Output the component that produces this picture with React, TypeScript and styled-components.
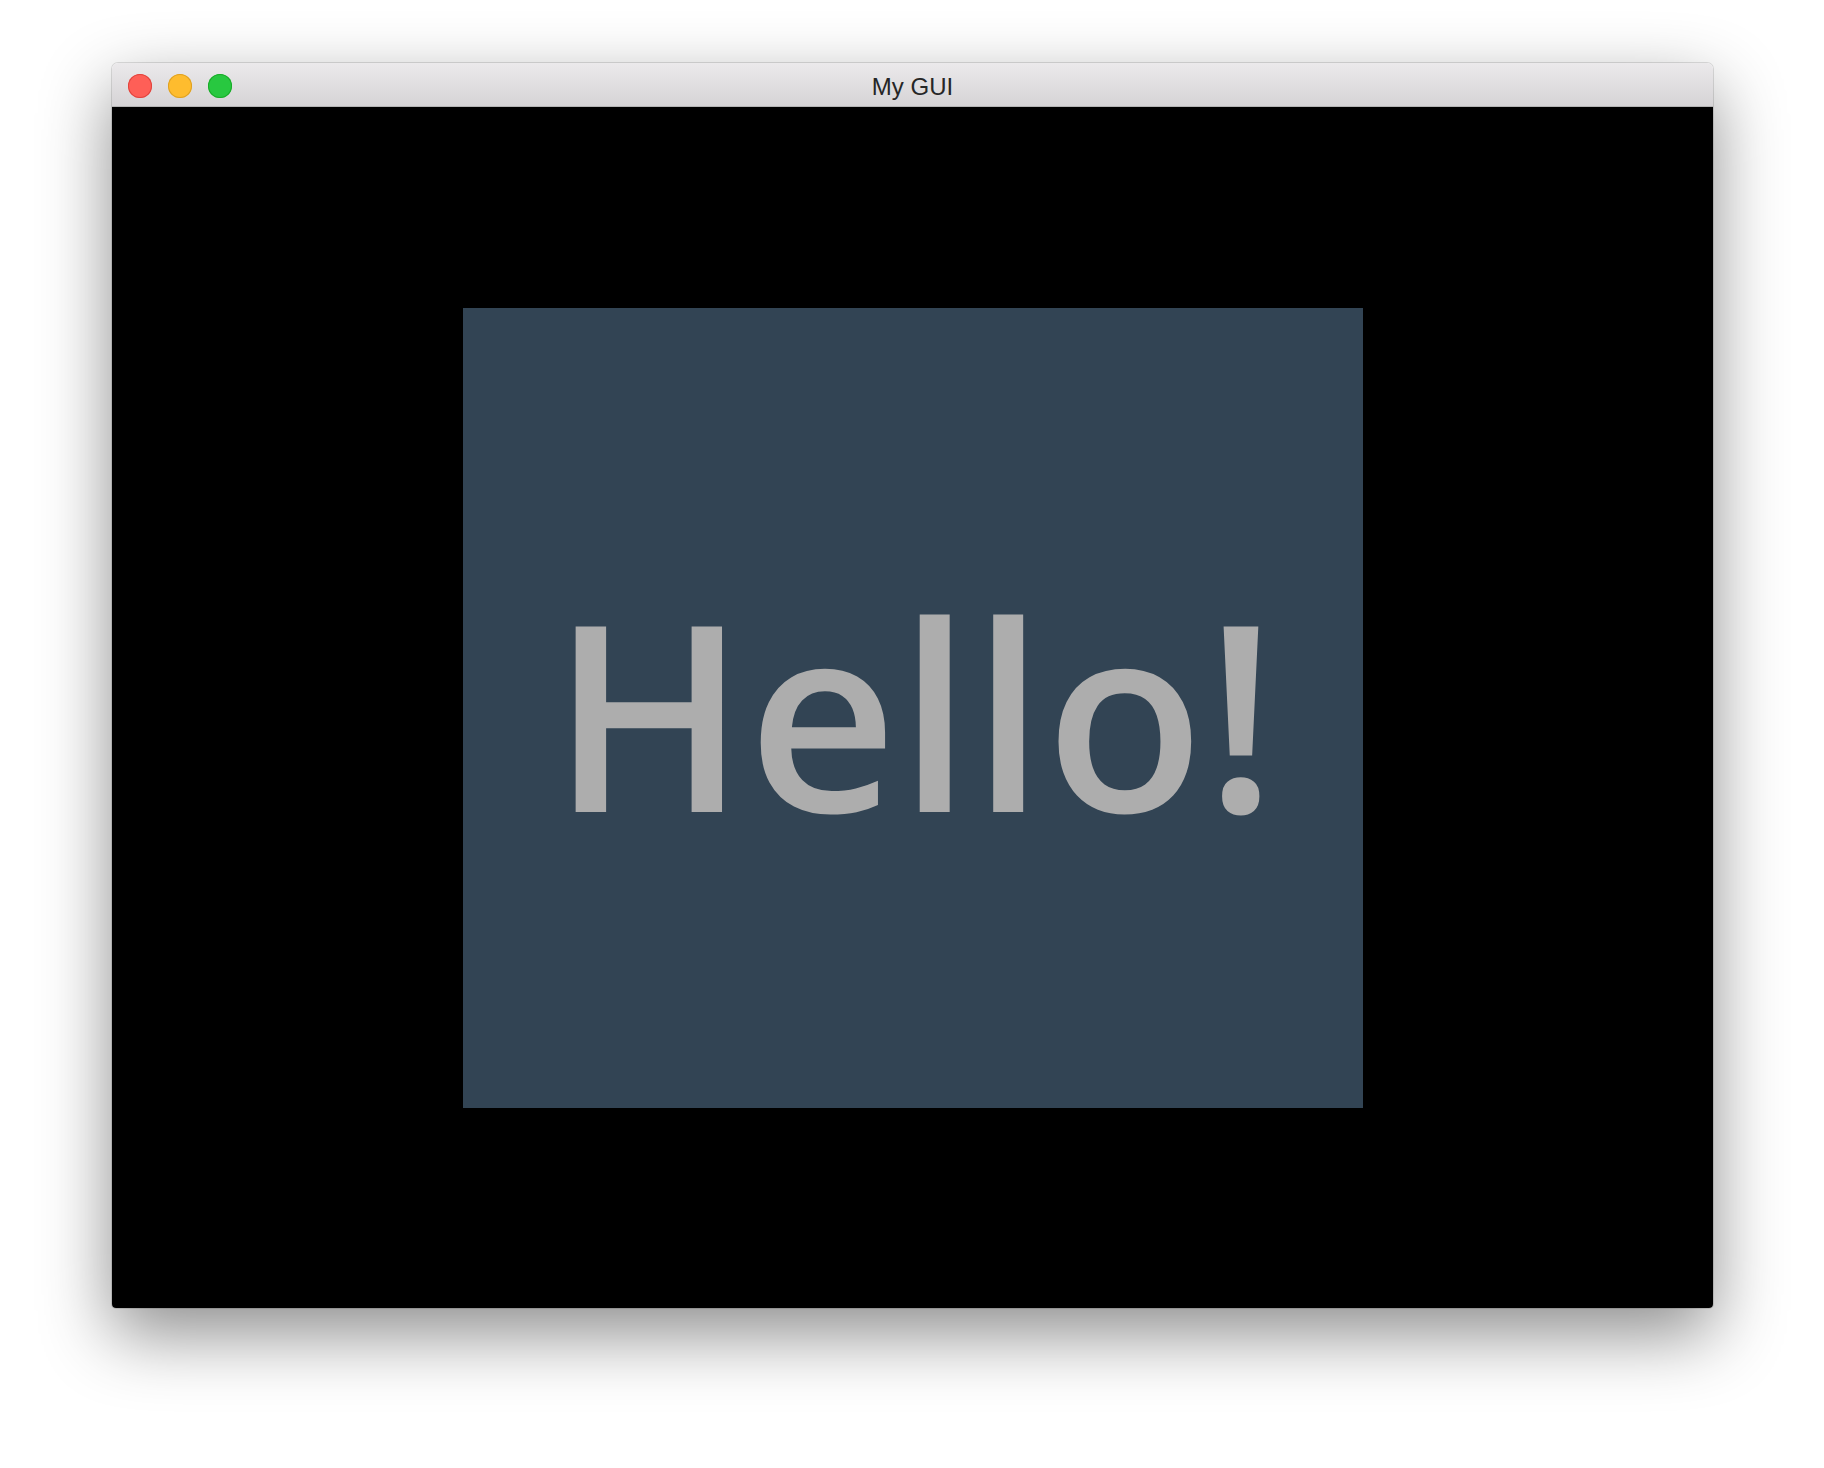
import styled, { createGlobalStyle } from 'styled-components'

const GlobalStyle = createGlobalStyle`
  html, body {
    margin: 0;
    padding: 0;
    background: #ffffff;
  }
`

const Page = styled.main`
  width: 1824px;
  height: 1468px;
  padding: 63px 0 0 112px;
  box-sizing: border-box;
  background: #ffffff;
`

const Window = styled.section`
  width: 1601px;
  display: flex;
  flex-direction: column;
  border-radius: 6px 6px 4px 4px;
  overflow: hidden;
  box-shadow:
    0 0 0 1px rgb(0 0 0 / 12%),
    0 26px 70px rgb(0 0 0 / 45%);
`

const TitleBar = styled.header`
  position: relative;
  height: 44px;
  display: flex;
  align-items: center;
  justify-content: center;
  background: linear-gradient(#ebe9eb, #d6d4d6);
  border-bottom: 1px solid #b4b4b4;
  box-sizing: border-box;
`

const Lights = styled.div`
  position: absolute;
  left: 16px;
  top: 11px;
  display: flex;
  gap: 16px;
`

const Light = styled.span<{ $fill: string; $edge: string }>`
  width: 24px;
  height: 24px;
  border-radius: 50%;
  background: ${({ $fill }) => $fill};
  box-shadow: inset 0 0 0 1px ${({ $edge }) => $edge};
`

const Title = styled.h1`
  margin: 4px 0 0;
  font-family: 'Liberation Sans', 'Open Sans', sans-serif;
  font-size: 24px;
  font-weight: 400;
  color: #262626;
`

const Content = styled.div`
  height: 1201px;
  display: flex;
  align-items: center;
  justify-content: center;
  background: #000000;
`

const Panel = styled.div`
  width: 900px;
  height: 800px;
  display: flex;
  align-items: center;
  justify-content: center;
  background: #324454;
`

const Greeting = styled.p`
  margin: 6px 0 0 4px;
  font-family: 'Open Sans', 'Noto Sans', sans-serif;
  font-size: 260px;
  font-weight: 600;
  line-height: 1;
  letter-spacing: 1px;
  color: #adadad;
`

export default function App() {
  return (
    <>
      <GlobalStyle />
      <Page>
        <Window>
          <TitleBar>
            <Lights>
              <Light $fill="#fe5f57" $edge="#e0443e" />
              <Light $fill="#febc2e" $edge="#dea123" />
              <Light $fill="#28c840" $edge="#1aab29" />
            </Lights>
            <Title>My GUI</Title>
          </TitleBar>
          <Content>
            <Panel>
              <Greeting>Hello!</Greeting>
            </Panel>
          </Content>
        </Window>
      </Page>
    </>
  )
}
